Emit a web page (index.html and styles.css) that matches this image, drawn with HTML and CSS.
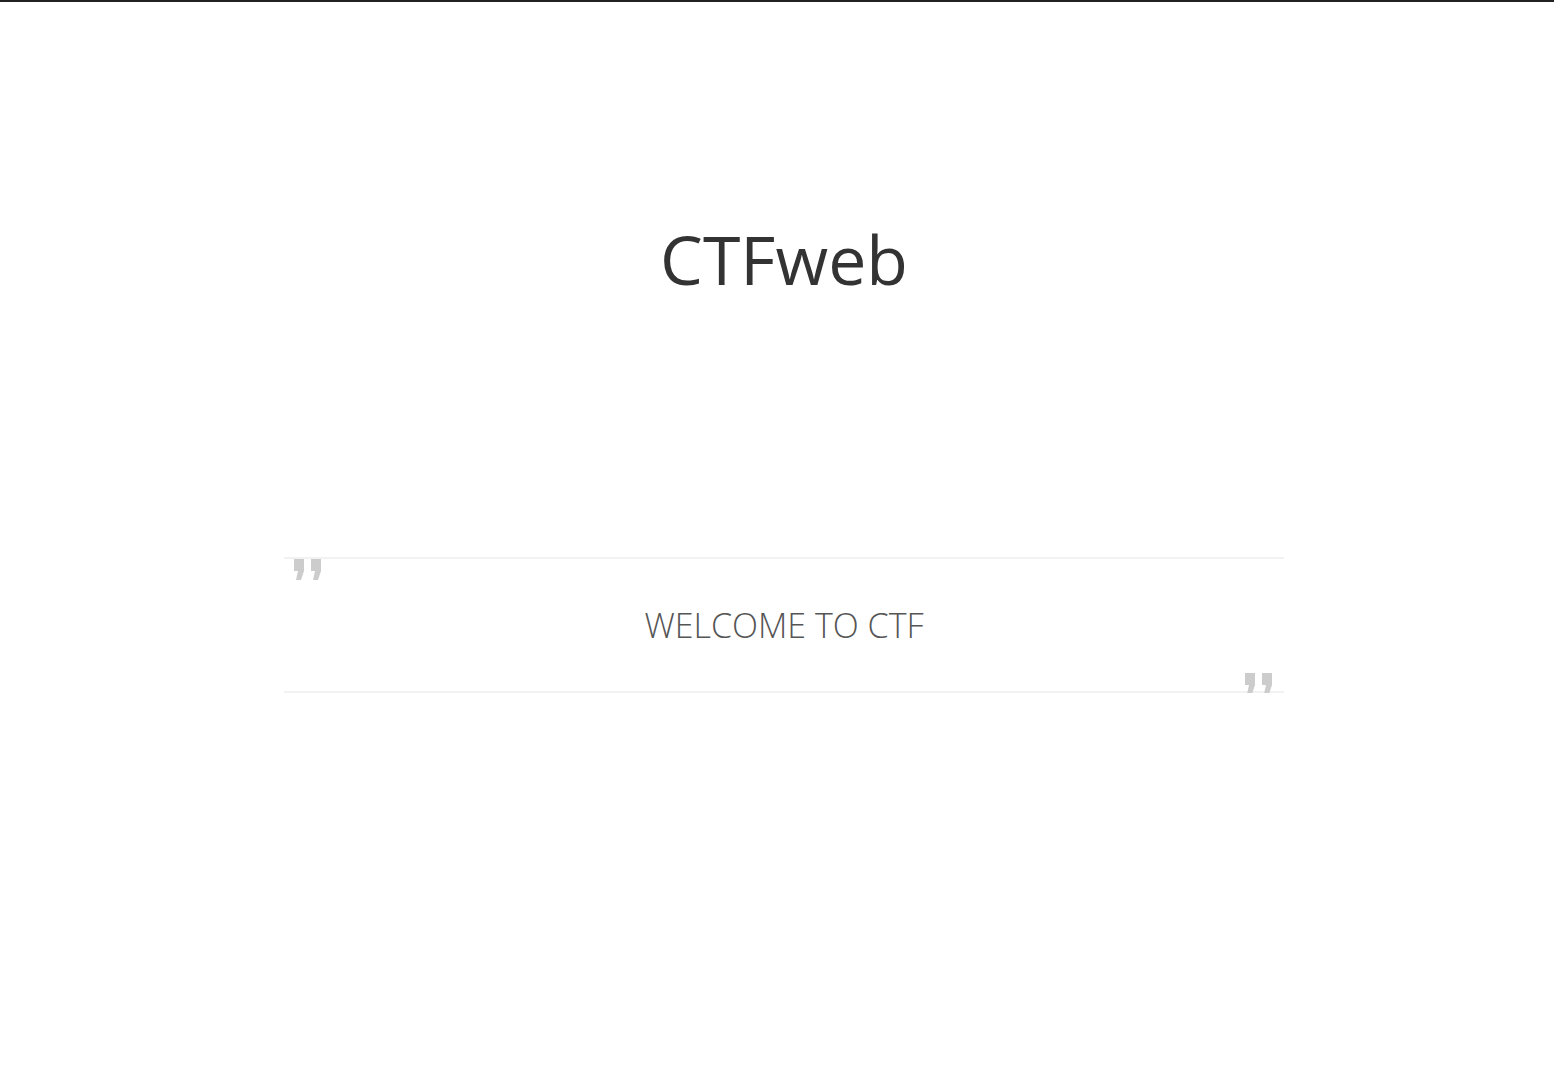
FILE: index.html
```html
<!DOCTYPE html>
<html>
<head>
<meta charset="utf-8">
<title>CTFweb</title>
<link rel="stylesheet" href="styles.css">
</head>
<body>
<div class="topbar"></div>
<main class="page">
  <h1 class="title">CTFweb</h1>
  <div class="quote">
    <svg class="mark mark-open" width="28" height="22" viewBox="0 0 28 22"><path d="M0 0H10V12L7 21H2L4 12H0Z M17 0H27V12L24 21H19L21 12H17Z" fill="#ccc"/></svg>
    <p class="quote-text">WELCOME TO CTF</p>
    <svg class="mark mark-close" width="28" height="22" viewBox="0 0 28 22"><path d="M0 0H10V12L7 21H2L4 12H0Z M17 0H27V12L24 21H19L21 12H17Z" fill="#ccc"/></svg>
  </div>
</main>
</body>
</html>
```

FILE: styles.css
```css
html, body {
  margin: 0;
  padding: 0;
  background: #fff;
}
body {
  font-family: "Open Sans", "Noto Sans", sans-serif;
  color: #333;
}
.topbar {
  height: 2px;
  background: #222;
}
.page {
  width: 1000px;
  margin-left: calc(50% - 493px);
  display: flex;
  flex-direction: column;
  align-items: stretch;
}
.title {
  margin: 212px 0 0;
  font-size: 68px;
  font-weight: 400;
  line-height: 90px;
  text-align: center;
  color: #333;
}
.quote {
  position: relative;
  margin-top: 253px;
  border-top: 2px solid #f2f2f2;
  border-bottom: 2px solid #f2f2f2;
  height: 132px;
  display: flex;
  align-items: center;
  justify-content: center;
}
.quote-text {
  margin: 0;
  font-size: 34px;
  font-weight: 300;
  color: #555;
}
.mark {
  position: absolute;
}
.mark-open {
  left: 10px;
  top: 0;
}
.mark-close {
  right: 11px;
  bottom: -4px;
}
```
